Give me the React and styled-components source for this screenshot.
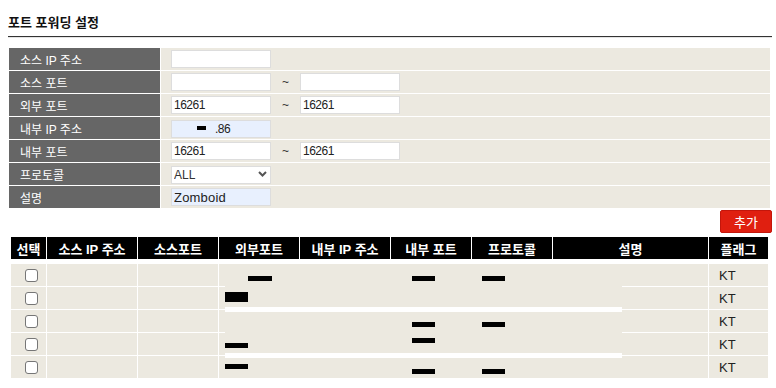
import React from 'react';
import styled, {createGlobalStyle} from 'styled-components';

const GlobalStyle = createGlobalStyle`
    body {
        margin: 0;
        background: #fff;
        font-family: "Liberation Sans", "Noto Sans CJK KR", sans-serif;
        color: #222;
    }
`;

const COLUMNS = '35px 90px 80px 80px 90px 80px 80px 155px 59px';

const Page = styled.div`
    width: 764px;
    padding: 8px 4px 0 8px;
`;

const Title = styled.h2`
    margin: 0;
    height: 29px;
    box-sizing: border-box;
    padding-top: 7px;
    font-size: 13px;
    line-height: 16px;
    font-weight: bold;
    color: #111;
    border-bottom: 1px solid #333;
    box-shadow: 0 1px 0 #e4e4e4;
`;

const FormGrid = styled.div`
    display: grid;
    grid-template-columns: 151px 1fr;
    grid-auto-rows: 22px;
    gap: 1px;
    margin: 11px 2px 0 1px;
    background: #fff;
`;

const Label = styled.div`
    display: flex;
    align-items: center;
    padding-left: 11px;
    background: #666;
    color: #fff;
    font-size: 12px;
`;

const Value = styled.div`
    display: flex;
    align-items: center;
    padding-left: 10px;
    background: #ece9e0;
`;

const TextInput = styled.input`
    box-sizing: border-box;
    width: 100px;
    height: 18px;
    margin: 0;
    padding: 0 2px;
    border: 1px solid #ddd;
    background: ${props => props.$filled ? '#e8f0fe' : '#fff'};
    font-family: "Liberation Sans", sans-serif;
    font-size: ${props => props.$large ? '13px' : '12px'};
    letter-spacing: ${props => props.$large ? '0.2px' : '-0.5px'};
    color: #222;
    outline: none;
`;

const IpField = styled.div`
    position: relative;
    input {
        padding-left: 43px;
    }
`;

const IpMark = styled.span`
    position: absolute;
    left: 26px;
    top: 7px;
    width: 9px;
    height: 4px;
    background: #000;
`;

const Tilde = styled.span`
    width: 29px;
    text-align: center;
    font-size: 12px;
    color: #333;
`;

const SelectWrap = styled.div`
    position: relative;
    width: 100px;
    height: 18px;
`;

const Select = styled.select`
    appearance: none;
    box-sizing: border-box;
    width: 100%;
    height: 100%;
    margin: 0;
    padding: 0 2px;
    border: 1px solid #ddd;
    border-radius: 0;
    background: #fff;
    font-family: "Liberation Sans", sans-serif;
    font-size: 12px;
    color: #333;
    outline: none;
`;

const Chevron = styled.svg`
    position: absolute;
    right: 4px;
    top: 6px;
    pointer-events: none;
`;

const ButtonRow = styled.div`
    display: flex;
    justify-content: flex-end;
    padding: 2px 0 4px;
`;

const AddButton = styled.button`
    width: 52px;
    height: 23px;
    margin: 0;
    padding: 0;
    border: 1px solid #c4160b;
    border-radius: 2px;
    background: #e01f10;
    color: #fff;
    font-family: "Noto Sans CJK KR", sans-serif;
    font-size: 13px;
    cursor: pointer;
`;

const ListTable = styled.div`
    margin: 0 4px 0 3px;
`;

const HeadRow = styled.div`
    display: grid;
    grid-template-columns: ${COLUMNS};
    column-gap: 1px;
    background: #fff;
`;

const HeadCell = styled.div`
    display: flex;
    align-items: center;
    justify-content: center;
    height: 22px;
    background: #000;
    color: #fff;
    font-size: 13px;
    font-weight: bold;
    white-space: nowrap;
`;

const Body = styled.div`
    position: relative;
    display: grid;
    row-gap: 1px;
    margin-top: 5px;
`;

const BodyRow = styled.div`
    display: grid;
    grid-template-columns: ${COLUMNS};
    column-gap: 1px;
    height: 22px;
`;

const Cell = styled.div`
    display: flex;
    align-items: center;
    padding-left: ${props => props.$pad || 0}px;
    background: #ece9e0;
    font-size: 13px;
    color: #222;
`;

const CheckBox = styled.input`
    appearance: none;
    width: 13px;
    height: 13px;
    margin: 0;
    border: 1px solid #767676;
    border-radius: 3px;
    background: #fff;
`;

// pasted-over area of the screenshot (masked values)
const Patch = styled.div`
    position: absolute;
    left: ${props => props.$left}px;
    top: ${props => props.$top}px;
    width: ${props => props.$width}px;
    height: ${props => props.$height}px;
    background: ${props => props.$white ? '#fff' : '#ece9e0'};
`;

const Mark = styled.span`
    position: absolute;
    left: ${props => props.$left}px;
    top: ${props => props.$top}px;
    width: ${props => props.$width || 23}px;
    height: ${props => props.$height || 5}px;
    background: #000;
`;

const headers = ['선택', '소스 IP 주소', '소스포트', '외부포트', '내부 IP 주소', '내부 포트', '프로토콜', '설명', '플래그'];

const marks = [
    [237, 12, 24, 5], [401, 12, 23, 5], [471, 12, 23, 5],
    [214, 28, 23, 10],
    [401, 58, 23, 5], [471, 58, 23, 5],
    [401, 74, 23, 5], [214, 79, 23, 5],
    [214, 100, 23, 5], [401, 105, 23, 5], [471, 105, 23, 5],
];

class App extends React.Component {
    render() {
        return (
            <Page>
                <GlobalStyle/>
                <Title>포트 포워딩 설정</Title>

                <FormGrid>
                    <Label>소스 IP 주소</Label>
                    <Value><TextInput defaultValue=""/></Value>

                    <Label>소스 포트</Label>
                    <Value><TextInput defaultValue=""/><Tilde>~</Tilde><TextInput defaultValue=""/></Value>

                    <Label>외부 포트</Label>
                    <Value><TextInput defaultValue="16261"/><Tilde>~</Tilde><TextInput defaultValue="16261"/></Value>

                    <Label>내부 IP 주소</Label>
                    <Value>
                        <IpField>
                            <TextInput $filled defaultValue=".86"/>
                            <IpMark/>
                        </IpField>
                    </Value>

                    <Label>내부 포트</Label>
                    <Value><TextInput defaultValue="16261"/><Tilde>~</Tilde><TextInput defaultValue="16261"/></Value>

                    <Label>프로토콜</Label>
                    <Value>
                        <SelectWrap>
                            <Select defaultValue="ALL">
                                <option>ALL</option>
                                <option>TCP</option>
                                <option>UDP</option>
                            </Select>
                            <Chevron width="9" height="6" viewBox="0 0 9 6">
                                <path d="M1 1 L4.5 4.5 L8 1" fill="none" stroke="#555" strokeWidth="2"/>
                            </Chevron>
                        </SelectWrap>
                    </Value>

                    <Label>설명</Label>
                    <Value><TextInput $filled $large defaultValue="Zomboid"/></Value>
                </FormGrid>

                <ButtonRow>
                    <AddButton>추가</AddButton>
                </ButtonRow>

                <ListTable>
                    <HeadRow>
                        {headers.map(h => <HeadCell key={h}>{h}</HeadCell>)}
                    </HeadRow>
                    <Body>
                        {[0, 1, 2, 3, 4].map(i =>
                            <BodyRow key={i}>
                                <Cell $pad={14}><CheckBox type="checkbox"/></Cell>
                                <Cell/><Cell/><Cell/><Cell/><Cell/><Cell/><Cell/>
                                <Cell $pad={10}>KT</Cell>
                            </BodyRow>
                        )}
                        <Patch $left={208} $top={0} $width={489} $height={22}/>
                        <Patch $left={214} $top={22} $width={397} $height={92}/>
                        <Patch $white $left={214} $top={43} $width={397} $height={5}/>
                        <Patch $white $left={214} $top={89} $width={397} $height={5}/>
                        {marks.map(([l, t, w, h], i) =>
                            <Mark key={i} $left={l} $top={t} $width={w} $height={h}/>
                        )}
                    </Body>
                </ListTable>
            </Page>
        );
    }
}

export default App;
